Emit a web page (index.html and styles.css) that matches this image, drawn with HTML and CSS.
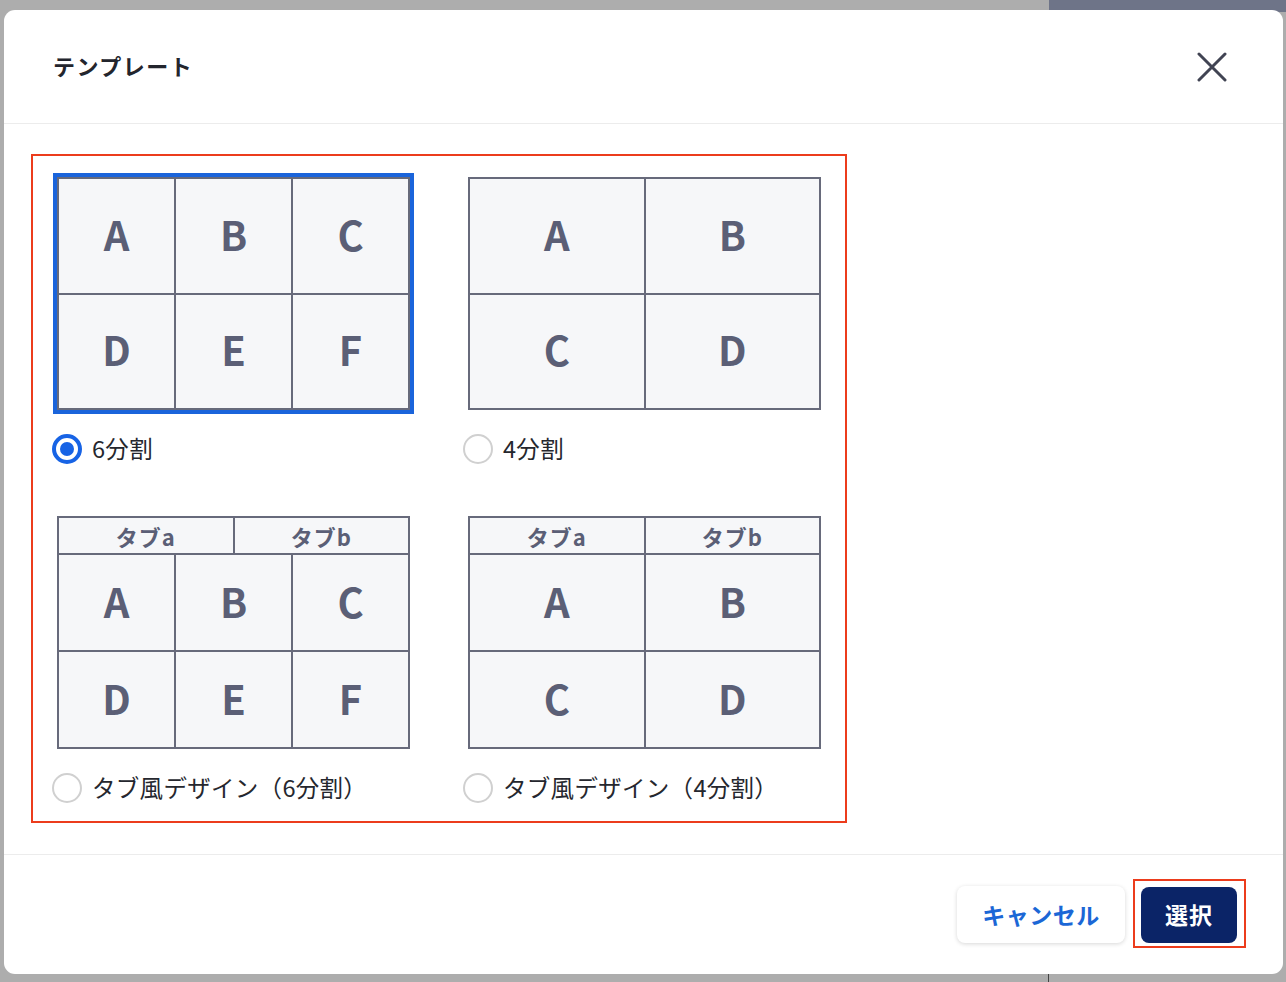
FILE: index.html
```html
<!DOCTYPE html>
<html lang="ja">
<head>
<meta charset="utf-8">
<title>テンプレート</title>
<link rel="stylesheet" href="styles.css">
</head>
<body>
<div class="backdrop">
  <div class="bg-slate"></div>
  <div class="bg-line"></div>
  <div class="modal">
    <header class="modal-header">
      <h1 class="modal-title">テンプレート</h1>
      <button class="close-btn" aria-label="閉じる">
        <svg width="30" height="30" viewBox="0 0 30 30"><path d="M2 2 L28 28 M28 2 L2 28" stroke="#414453" stroke-width="3" stroke-linecap="round" fill="none"/></svg>
      </button>
    </header>
    <main class="modal-body">
      <div class="highlight">
        <div class="options">
          <div class="option">
            <div class="card selected">
              <div class="grid grid-6">
                <div class="cell">A</div><div class="cell">B</div><div class="cell">C</div>
                <div class="cell">D</div><div class="cell">E</div><div class="cell">F</div>
              </div>
            </div>
            <label class="radio-row"><span class="radio checked"></span><span class="radio-label">6分割</span></label>
          </div>
          <div class="option">
            <div class="card">
              <div class="grid grid-4">
                <div class="cell">A</div><div class="cell">B</div>
                <div class="cell">C</div><div class="cell">D</div>
              </div>
            </div>
            <label class="radio-row"><span class="radio"></span><span class="radio-label">4分割</span></label>
          </div>
          <div class="option">
            <div class="card">
              <div class="tabgrid">
                <div class="tabs"><div class="tab">タブa</div><div class="tab">タブb</div></div>
                <div class="tab-body grid-6">
                  <div class="cell">A</div><div class="cell">B</div><div class="cell">C</div>
                  <div class="cell">D</div><div class="cell">E</div><div class="cell">F</div>
                </div>
              </div>
            </div>
            <label class="radio-row"><span class="radio"></span><span class="radio-label">タブ風デザイン（6分割）</span></label>
          </div>
          <div class="option">
            <div class="card">
              <div class="tabgrid">
                <div class="tabs"><div class="tab">タブa</div><div class="tab">タブb</div></div>
                <div class="tab-body grid-4">
                  <div class="cell">A</div><div class="cell">B</div>
                  <div class="cell">C</div><div class="cell">D</div>
                </div>
              </div>
            </div>
            <label class="radio-row"><span class="radio"></span><span class="radio-label">タブ風デザイン（4分割）</span></label>
          </div>
        </div>
      </div>
    </main>
    <footer class="modal-footer">
      <button class="btn btn-cancel">キャンセル</button>
      <div class="select-wrap"><button class="btn btn-primary">選択</button></div>
    </footer>
  </div>
</div>
</body>
</html>
```
FILE: styles.css
```css
* { box-sizing: border-box; }
html, body { margin: 0; padding: 0; }
body {
  font-family: "Noto Sans CJK JP", "Noto Sans", sans-serif;
  background: #adadad;
  width: 1286px;
  height: 982px;
  overflow: hidden;
}
.backdrop {
  position: relative;
  width: 1286px;
  height: 982px;
  padding: 10px 3px 8px 4px;
}
.bg-slate {
  position: absolute;
  left: 1049px;
  top: 0;
  right: 0;
  height: 12px;
  background: #6e7488;
}
.bg-line {
  position: absolute;
  left: 1048px;
  top: 960px;
  width: 1px;
  height: 22px;
  background: #444;
}
.modal {
  position: relative;
  width: 1279px;
  height: 964px;
  background: #fff;
  border-radius: 11px;
  display: flex;
  flex-direction: column;
}
.modal-header {
  height: 114px;
  border-bottom: 1px solid #ececec;
  display: flex;
  align-items: center;
  justify-content: space-between;
  padding: 0 56px 0 49px;
}
.modal-title {
  margin: 0;
  font-size: 22px;
  font-weight: 700;
  color: #23252d;
  letter-spacing: 1.5px;
  padding-bottom: 4px;
}
.close-btn {
  border: 0;
  background: none;
  padding: 0;
  width: 30px;
  height: 30px;
  display: flex;
  cursor: pointer;
}
.modal-body {
  flex: 1;
  padding: 30px 27px;
}
.highlight {
  width: 816px;
  border: 2px solid #ec3c1c;
  padding: 17px 20px 18px 20px;
}
.options {
  display: grid;
  grid-template-columns: 361px 361px;
  column-gap: 50px;
  row-gap: 48px;
}
.option { display: flex; flex-direction: column; }
.card {
  border: 4px solid transparent;
  width: 361px;
}
.card.selected { border-color: #1a64db; }
.grid, .tabgrid {
  width: 353px;
  height: 233px;
  background: #676a7b;
  padding: 2px;
  gap: 2px;
}
.grid { display: grid; }
.grid-6 {
  display: grid;
  grid-template-columns: repeat(3, 1fr);
  grid-template-rows: repeat(2, 1fr);
  gap: 2px;
}
.grid-4 {
  display: grid;
  grid-template-columns: repeat(2, 1fr);
  grid-template-rows: repeat(2, 1fr);
  gap: 2px;
}
.cell {
  background: #f6f7f9;
  display: flex;
  align-items: center;
  justify-content: center;
  font-family: "Noto Sans CJK JP", "Noto Sans", sans-serif;
  font-size: 40px;
  font-weight: 700;
  color: #5b5f76;
  padding-bottom: 4px;
}
.tabgrid {
  display: flex;
  flex-direction: column;
}
.tabs {
  display: grid;
  grid-template-columns: 1fr 1fr;
  gap: 2px;
  height: 35px;
}
.tab {
  background: #f6f7f9;
  display: flex;
  align-items: center;
  justify-content: center;
  font-size: 22px;
  font-weight: 700;
  color: #5b5f76;
  letter-spacing: 1px;
  padding-top: 1px;
}
.tab-body { flex: 1; }
.radio-row {
  display: flex;
  align-items: center;
  height: 30px;
  margin-top: 20px;
  margin-left: -1px;
}
.radio {
  width: 30px;
  height: 30px;
  border-radius: 50%;
  border: 2px solid #d0d0d0;
  background: #fff;
  display: flex;
  align-items: center;
  justify-content: center;
  flex: none;
}
.radio.checked {
  border: 4px solid #1763e5;
}
.radio.checked::after {
  content: "";
  width: 14px;
  height: 14px;
  border-radius: 50%;
  background: #1763e5;
}
.radio-label {
  margin-left: 10px;
  font-size: 23.5px;
  color: #25272e;
  letter-spacing: 0.3px;
  padding-bottom: 2px;
}
.modal-footer {
  height: 120px;
  border-top: 1px solid #ececec;
  display: flex;
  justify-content: flex-end;
  align-items: flex-start;
  padding: 24px 37px 0 0;
}
.btn {
  font-family: "Noto Sans CJK JP", "Noto Sans", sans-serif;
  font-weight: 700;
  font-size: 23px;
  border-radius: 8px;
  cursor: pointer;
  padding-bottom: 3px;
}
.btn-cancel {
  margin-top: 7px;
  width: 168px;
  height: 57px;
  background: #fff;
  color: #1b67d6;
  border: 0;
  box-shadow: 0 1px 4px rgba(0,0,0,0.16);
  letter-spacing: 0.5px;
}
.select-wrap {
  margin-left: 8px;
  border: 2px solid #ec3c1c;
  padding: 6px 7px 3px 6px;
}
.btn-primary {
  display: block;
  width: 96px;
  height: 56px;
  background: #0b2467;
  color: #fff;
  border: 0;
  letter-spacing: 1px;
}
```
